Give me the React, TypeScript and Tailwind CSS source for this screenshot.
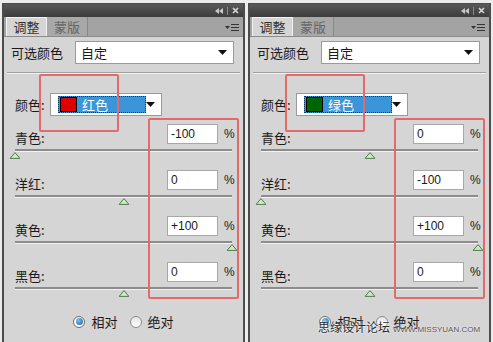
import React from "react";

const CJK = "font-['Noto_Sans_CJK_SC','Noto_Sans',sans-serif]";

type SliderRow = { label: string; value: string; pos: number };

type PanelProps = {
  swatch: string;
  colorName: string;
  rows: SliderRow[];
  watermark?: boolean;
};

function DownArrow() {
  return (
    <svg width="9" height="5" viewBox="0 0 9 5">
      <path d="M0 0h9L4.5 5z" fill="#111" />
    </svg>
  );
}

function Thumb() {
  return (
    <svg width="11" height="7" viewBox="0 0 11 7">
      <path d="M5.5 0.6L10.4 6.4H0.6z" fill="#cfe8c8" stroke="#4f7d4a" strokeWidth="1" />
    </svg>
  );
}

function TitleBar() {
  return (
    <div className="h-[13px] bg-gradient-to-b from-[#5a5a5a] to-[#3c3c3c] flex items-center justify-end pr-[4px] gap-[4px]">
      <svg width="8" height="6" viewBox="0 0 8 6">
        <path d="M4 0v6L0 3z M8 0v6L4 3z" fill="#c8c8c8" />
      </svg>
      <div className="w-px h-[8px] bg-[#8a8a8a]" />
      <svg width="7" height="7" viewBox="0 0 7 7">
        <path d="M1 1l5 5M6 1l-5 5" stroke="#d8d8d8" strokeWidth="1.6" />
      </svg>
    </div>
  );
}

function Tabs() {
  return (
    <div className={`h-[20px] bg-[#a3a3a3] border-b border-[#8c8c8c] flex items-end pl-[2px] ${CJK}`}>
      <div className="h-[19px] w-[41px] bg-[#d5d5d5] border-t border-x border-[#f2f2f2] flex items-center justify-center text-[13px] text-[#333]">
        调整
      </div>
      <div className="h-[19px] w-[41px] bg-[#a8a8a8] border-r border-[#888] flex items-center justify-center text-[13px] text-[#666]">
        蒙版
      </div>
      <div className="flex-1" />
      <div className="flex items-center gap-px pr-[4px] pb-[5px]">
        <svg width="5" height="3" viewBox="0 0 5 3">
          <path d="M0 0h5L2.5 3z" fill="#333" />
        </svg>
        <div className="flex flex-col gap-[2px]">
          <div className="w-[8px] h-px bg-[#333]" />
          <div className="w-[8px] h-px bg-[#333]" />
          <div className="w-[8px] h-px bg-[#333]" />
        </div>
      </div>
    </div>
  );
}

function Panel({ swatch, colorName, rows, watermark }: PanelProps) {
  return (
    <div className={`relative w-[243px] h-[339px] border-x-2 border-t border-[#4c4c4c] bg-[#d5d5d5] ${CJK} text-[#1a1a1a]`}>
      <TitleBar />
      <Tabs />

      {/* preset row */}
      <div className="flex items-center h-[23px] mt-[4px] pl-[7px]">
        <span className="text-[13px] w-[64px]">可选颜色</span>
        <div className="w-[159px] h-[23px] bg-white border border-[#9a9a9a] flex items-center pl-[5px] pr-[6px]">
          <span className="text-[13px] flex-1">自定</span>
          <DownArrow />
        </div>
      </div>

      <div className="mx-[3px] mt-[8px] border-t border-[#a2a2a2] border-b border-b-[#efefef]" />

      {/* colors row */}
      <div className="flex items-center h-[23px] mt-[19px] pl-[11px]">
        <span className="text-[13px] w-[35px]">颜色:</span>
        <div className="w-[112px] h-[23px] bg-white border border-[#9a9a9a] flex items-center pl-[7px] pr-[6px]">
          <div className="w-[88px] h-[17px] bg-[#3a96d9] border border-dotted border-[#0b3a66] flex items-center pl-px">
            <div className="w-[17px] h-[15px] border border-black" style={{ backgroundColor: swatch }} />
            <span className="text-[13px] text-white ml-[5px] leading-none">{colorName}</span>
          </div>
          <div className="flex-1" />
          <DownArrow />
        </div>
      </div>

      {/* sliders */}
      <div className="flex flex-col mt-[8px]">
        {rows.map((r) => (
          <div key={r.label} className="h-[46px] flex flex-col">
            <div className="flex items-center h-[20px] pl-[11px]">
              <span className="text-[13px] flex-1 pt-[8px]">{r.label}:</span>
              <div className="w-[51px] h-[20px] bg-white border border-[#a8a8a8] text-[12px] font-['Liberation_Sans',sans-serif] flex items-center pl-[3px]">
                {r.value}
              </div>
              <span className="w-[25px] text-[12px] font-['Liberation_Sans',sans-serif] pl-[6px]">%</span>
            </div>
            <div className="relative mx-[11px] mt-[5px] h-[3px] border-t-2 border-[#8c8c8c] border-b border-b-[#f2f2f2]">
              <div className="absolute top-[1px] -translate-x-1/2" style={{ left: `${r.pos * 100}%` }}>
                <Thumb />
              </div>
            </div>
          </div>
        ))}
      </div>

      {/* radios */}
      <div className="flex items-center justify-center gap-[12px] mt-[4px] text-[13px]">
        <div className="flex items-center gap-[6px]">
          <div className="w-[12px] h-[12px] rounded-full border border-[#6a6a6a] bg-white flex items-center justify-center">
            <div className="w-[7px] h-[7px] rounded-full bg-[radial-gradient(circle_at_35%_35%,#7fc0f0,#1b5c9e)]" />
          </div>
          <span>相对</span>
        </div>
        <div className="flex items-center gap-[6px]">
          <div className="w-[12px] h-[12px] rounded-full border border-[#8a8a8a] bg-gradient-to-b from-[#e6e6e6] to-white" />
          <span>绝对</span>
        </div>
      </div>

      {/* annotation boxes */}
      <div className="absolute left-[35px] top-[70px] w-[80px] h-[58px] border-2 border-[#e36a6a] rounded-[2px]" />
      <div className="absolute left-[144px] top-[114px] w-[91px] h-[181px] border-2 border-[#e36a6a] rounded-[2px]" />

      {watermark && (
        <div className="absolute left-[68px] top-[314px] flex items-baseline gap-[3px] whitespace-nowrap pointer-events-none">
          <span className="text-[12px] text-[#2a2a2a] [text-shadow:0_0_2px_#fff,0_0_2px_#fff]">思缘设计论坛</span>
          <span className="text-[8px] text-[#555] font-['Liberation_Sans',sans-serif] [text-shadow:0_0_2px_#fff]">
            WWW.MISSYUAN.COM
          </span>
        </div>
      )}
    </div>
  );
}

export default function App() {
  return (
    <div className="w-[493px] h-[342px] overflow-hidden bg-[#ececec] flex pt-[3px] pl-[2px] gap-[3px]">
      <Panel
        swatch="#e00000"
        colorName="红色"
        rows={[
          { label: "青色", value: "-100", pos: 0 },
          { label: "洋红", value: "0", pos: 0.5 },
          { label: "黄色", value: "+100", pos: 1 },
          { label: "黑色", value: "0", pos: 0.5 },
        ]}
      />
      <Panel
        swatch="#006400"
        colorName="绿色"
        watermark
        rows={[
          { label: "青色", value: "0", pos: 0.5 },
          { label: "洋红", value: "-100", pos: 0 },
          { label: "黄色", value: "+100", pos: 1 },
          { label: "黑色", value: "0", pos: 0.5 },
        ]}
      />
    </div>
  );
}
